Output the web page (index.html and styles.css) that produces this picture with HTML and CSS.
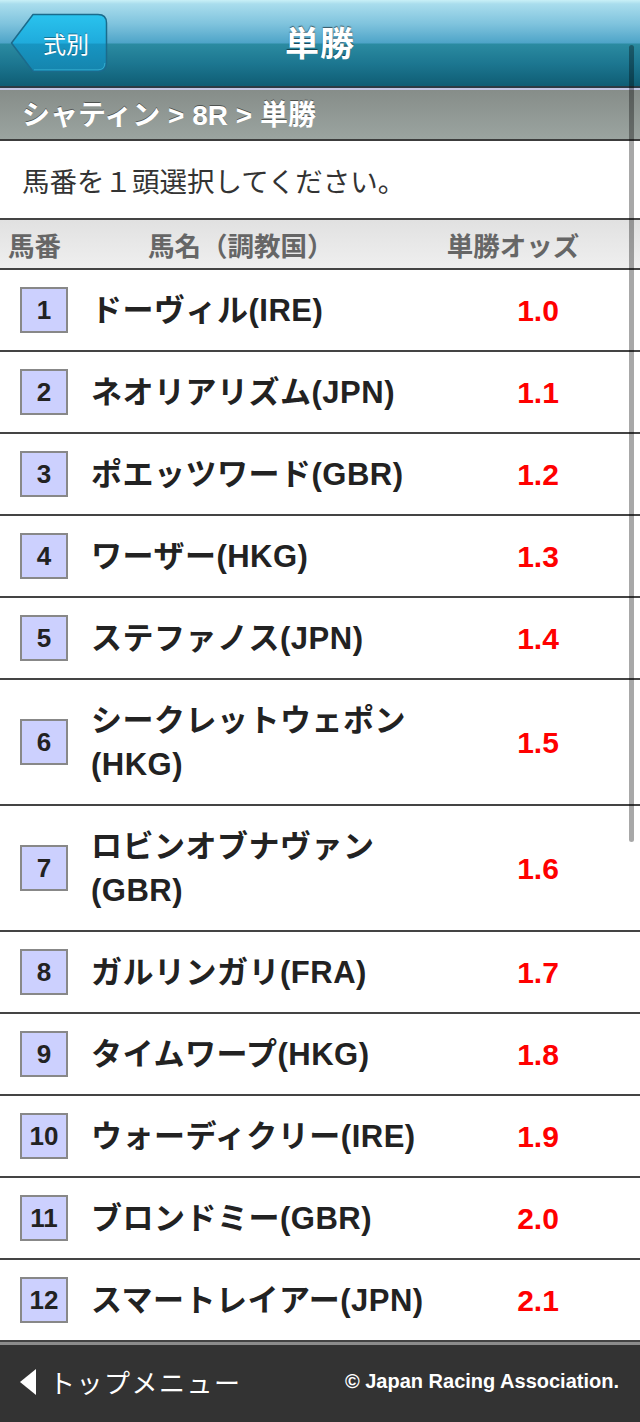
FILE: index.html
```html
<!DOCTYPE html>
<html lang="ja">
<head>
<meta charset="utf-8">
<title>単勝</title>
<link rel="stylesheet" href="styles.css">
</head>
<body>
<div class="page">
  <header class="topbar">
    <a class="back-btn" href="#">
      <svg class="back-shape" viewBox="0 0 98 60" preserveAspectRatio="none" aria-hidden="true">
        <defs>
          <linearGradient id="btnFill" x1="0" y1="0" x2="0" y2="1">
            <stop offset="0" stop-color="#2ac3ee"/>
            <stop offset="0.5" stop-color="#1fabdc"/>
            <stop offset="0.52" stop-color="#1795c2"/>
            <stop offset="1" stop-color="#1584ad"/>
          </linearGradient>
        </defs>
        <path d="M23 1.5 H88 Q96.5 1.5 96.5 10 V50 Q96.5 58.5 88 58.5 H23 L1.5 30 Z" fill="url(#btnFill)" stroke="#1b6b8c" stroke-width="1.5" stroke-linejoin="round"/>
        <path d="M24 56.8 H88 Q94.8 56.8 94.8 50" fill="none" stroke="#3db8d8" stroke-width="1" opacity="0.7"/>
      </svg>
      <span class="back-label">式別</span>
    </a>
    <h1 class="title">単勝</h1>
    <span class="spacer"></span>
  </header>

  <nav class="crumbs">シャティン &gt; 8R &gt; 単勝</nav>

  <p class="notice">馬番を１頭選択してください。</p>

  <div class="col-head">
    <span class="ch-num">馬番</span>
    <span class="ch-name">馬名（調教国）</span>
    <span class="ch-odds">単勝オッズ</span>
  </div>

  <ul class="runners">
    <li class="runner"><span class="num">1</span><span class="name">ドーヴィル(IRE)</span><span class="odds">1.0</span></li>
    <li class="runner"><span class="num">2</span><span class="name">ネオリアリズム(JPN)</span><span class="odds">1.1</span></li>
    <li class="runner"><span class="num">3</span><span class="name">ポエッツワード(GBR)</span><span class="odds">1.2</span></li>
    <li class="runner"><span class="num">4</span><span class="name">ワーザー(HKG)</span><span class="odds">1.3</span></li>
    <li class="runner"><span class="num">5</span><span class="name">ステファノス(JPN)</span><span class="odds">1.4</span></li>
    <li class="runner"><span class="num">6</span><span class="name">シークレットウェポン(HKG)</span><span class="odds">1.5</span></li>
    <li class="runner"><span class="num">7</span><span class="name">ロビンオブナヴァン(GBR)</span><span class="odds">1.6</span></li>
    <li class="runner"><span class="num">8</span><span class="name">ガルリンガリ(FRA)</span><span class="odds">1.7</span></li>
    <li class="runner"><span class="num">9</span><span class="name">タイムワープ(HKG)</span><span class="odds">1.8</span></li>
    <li class="runner"><span class="num">10</span><span class="name">ウォーディクリー(IRE)</span><span class="odds">1.9</span></li>
    <li class="runner"><span class="num">11</span><span class="name">ブロンドミー(GBR)</span><span class="odds">2.0</span></li>
    <li class="runner"><span class="num">12</span><span class="name">スマートレイアー(JPN)</span><span class="odds">2.1</span></li>
  </ul>

  <footer class="footbar">
    <a class="top-link" href="#"><span class="tri"></span>トップメニュー</a>
    <span class="copy">© Japan Racing Association.</span>
  </footer>

  <div class="scroll-thumb"></div>
</div>
</body>
</html>
```

FILE: styles.css
```css
* {
  box-sizing: border-box;
}

html, body {
  margin: 0;
  padding: 0;
  background: #ffffff;
}

body {
  font-family: "Liberation Sans", "Noto Sans CJK JP", sans-serif;
  color: #222;
}

.page {
  position: relative;
  width: 640px;
  min-height: 1422px;
  display: flex;
  flex-direction: column;
}

/* ---- title bar ---- */
.topbar {
  height: 88px;
  display: grid;
  grid-template-columns: 1fr auto 1fr;
  align-items: center;
  background: linear-gradient(to bottom,
    #c9f0f7 0px, #a9dded 4px, #7fc3dd 24px, #4ea4c8 43px,
    #2b8ba1 44px, #1c7690 64px, #0f5d74 86px);
  border-bottom: 2px solid #2c3a44;
}

.back-btn {
  position: relative;
  justify-self: start;
  margin-left: 10px;
  width: 98px;
  height: 60px;
  display: flex;
  align-items: center;
  justify-content: center;
  padding-left: 14px;
  text-decoration: none;
}

.back-shape {
  position: absolute;
  inset: 0;
  width: 100%;
  height: 100%;
}

.back-label {
  position: relative;
  color: #fff;
  font-family: "Noto Sans CJK JP", sans-serif;
  font-size: 23px;
  font-weight: 400;
  text-shadow: 0 -1px 0 rgba(0, 40, 60, 0.45);
}

.title {
  margin: 0 0 4px;
  color: #fff;
  font-family: "Noto Sans CJK JP", sans-serif;
  font-size: 34px;
  font-weight: 700;
  letter-spacing: 1px;
  text-shadow: 0 -1px 1px rgba(0, 0, 0, 0.55);
}

/* ---- breadcrumb ---- */
.crumbs {
  height: 53px;
  border-top: 2px solid #c3c6e4;
  border-bottom: 2px solid #3c3c3c;
  background: linear-gradient(to bottom, #868d89, #9ba4a0);
  padding: 0 0 4px 22px;
  display: flex;
  align-items: center;
  color: #fff;
  font-size: 28px;
  font-weight: 700;
  text-shadow: 0 -1px 0 rgba(0, 0, 0, 0.45);
}

/* ---- instruction ---- */
.notice {
  margin: 0;
  height: 79px;
  border-bottom: 2px solid #444;
  padding-left: 22px;
  display: flex;
  align-items: center;
  color: #333;
  font-family: "Noto Sans CJK JP", sans-serif;
  font-size: 27.5px;
  font-weight: 400;
}

/* ---- column headings ---- */
.col-head {
  height: 50px;
  border-bottom: 2px solid #444;
  background: linear-gradient(to bottom, #e1e1e1, #efefef);
  display: grid;
  grid-template-columns: 88px 312px 1fr;
  align-items: center;
  padding-right: 14px;
  color: #666;
  font-family: "Noto Sans CJK JP", sans-serif;
  font-size: 26.5px;
  font-weight: 700;
}

.ch-num {
  padding-left: 8px;
}

.ch-name {
  padding-left: 60px;
}

.ch-odds {
  text-align: center;
}

/* ---- runner list ---- */
.runners {
  list-style: none;
  margin: 0;
  padding: 0;
}

.runner {
  display: grid;
  grid-template-columns: 91px 355px 184px;
  align-items: center;
  padding: 19px 10px 17px 0;
  min-height: 82px;
  border-bottom: 2px solid #444;
}

.num {
  margin: -2px 0 0 20px;
  width: 48px;
  height: 46px;
  border: 2px solid #888;
  background: #ccd0fe;
  display: flex;
  align-items: center;
  justify-content: center;
  color: #222;
  font-size: 26px;
  font-weight: 700;
}

.name {
  font-size: 31px;
  font-weight: 700;
  line-height: 44px;
  letter-spacing: 0.5px;
  color: #222;
}

.odds {
  text-align: center;
  color: #ff0000;
  font-size: 30px;
  font-weight: 700;
}

/* ---- footer ---- */
.footbar {
  margin-top: auto;
  height: 80px;
  border-top: 3px solid #8c8c8c;
  background: #333;
  display: flex;
  align-items: center;
  justify-content: space-between;
  padding: 0 21px 4px 20px;
}

.top-link {
  display: flex;
  align-items: center;
  color: #fff;
  text-decoration: none;
  font-family: "Noto Sans CJK JP", sans-serif;
  font-size: 26px;
  font-weight: 400;
  letter-spacing: 1.5px;
}

.tri {
  width: 0;
  height: 0;
  border-top: 13px solid transparent;
  border-bottom: 13px solid transparent;
  border-right: 16px solid #fff;
  margin-right: 13px;
}

.copy {
  color: #fff;
  font-size: 20px;
  font-weight: 700;
}

/* scroll indicator drawn over the content */
.scroll-thumb {
  position: absolute;
  left: 629px;
  top: 45px;
  width: 5px;
  height: 797px;
  border-radius: 3px;
  background: rgba(0, 0, 0, 0.34);
}
```
